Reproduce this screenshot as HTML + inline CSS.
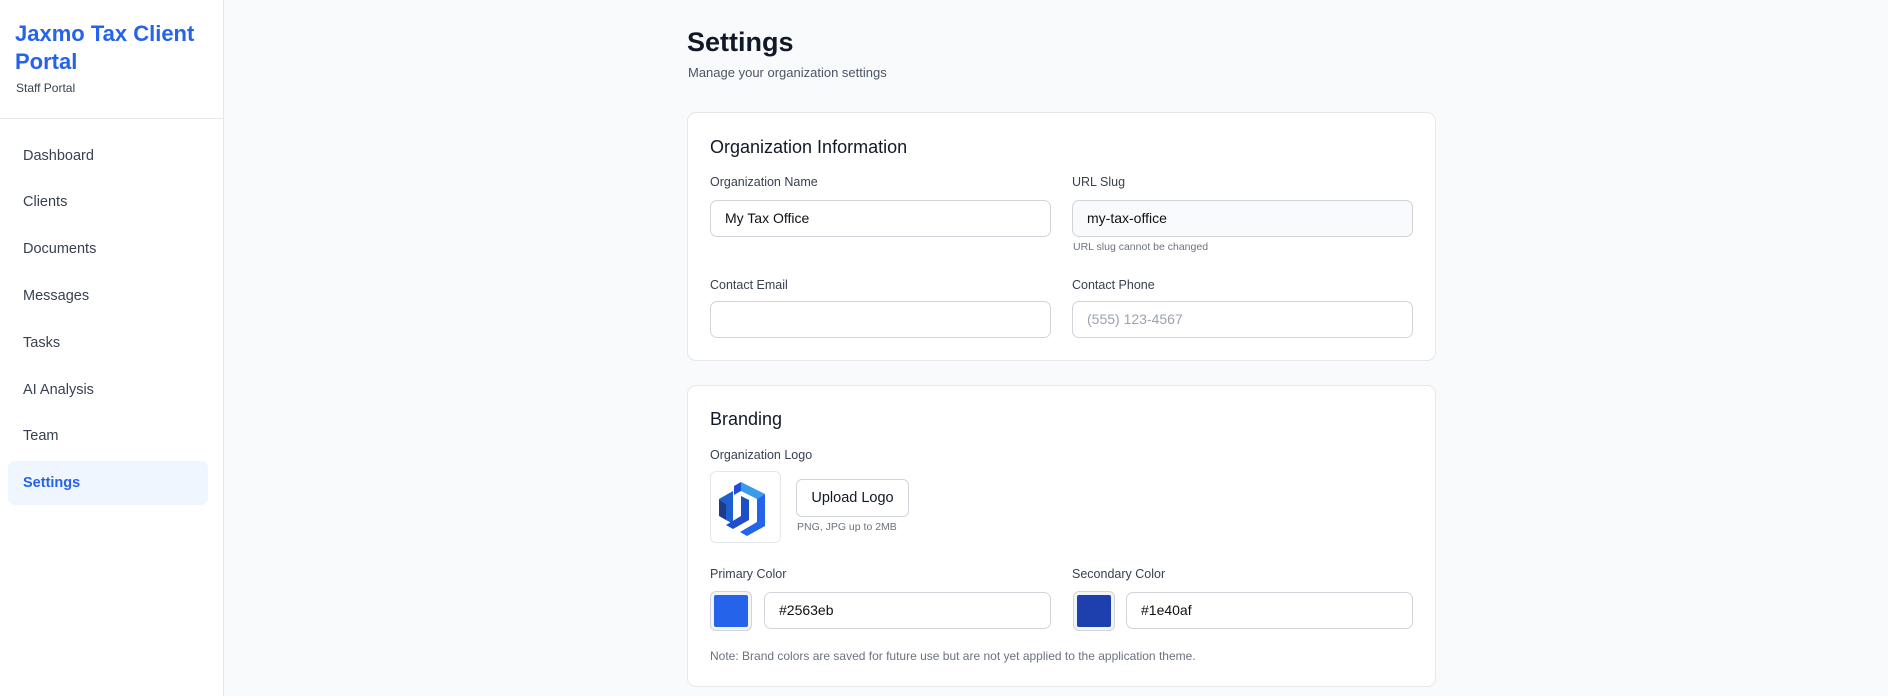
<!DOCTYPE html>
<html><head><style>
*{box-sizing:border-box;margin:0;padding:0}
body{width:1888px;height:696px;overflow:hidden;background:#f9fafb;font-family:"Liberation Sans",sans-serif;color:#111827;position:relative}
.side{position:absolute;left:0;top:0;width:224px;height:696px;background:#fff;border-right:1px solid #e5e7eb}
.brand{position:absolute;left:15px;top:20px;font-size:22px;font-weight:bold;color:#2563eb;line-height:28px;width:200px}
.sub{position:absolute;left:16px;top:81px;font-size:12px;color:#374151}
.hr{position:absolute;left:0;top:118px;width:223px;border-top:1px solid #e5e7eb}
.nav{position:absolute;left:23px;font-size:14.5px;color:#374151;transform:translateY(-50%)}
.act{position:absolute;left:8px;top:461px;width:200px;height:44px;background:#eff6ff;border-radius:7px}
.abs{position:absolute}
.card{position:absolute;left:687px;width:749px;background:#fff;border:1px solid #e5e7eb;border-radius:9px}
.lbl{position:absolute;font-size:12.5px;color:#374151;transform:translateY(-50%)}
.inp{position:absolute;height:37px;border:1px solid #d1d5db;border-radius:7px;background:#fff;font-size:14px;padding-left:14px;line-height:35px;color:#111}
.sw{position:absolute;width:42px;height:40px;border:1px solid #d1d5db;border-radius:6px;background:#f3f4f6;padding:3px}
.sw div{width:100%;height:100%;border-radius:2px}
</style></head><body>
<div class="side">
<div class="brand">Jaxmo Tax Client Portal</div>
<div class="sub">Staff Portal</div>
<div class="hr"></div>
<div class="act"></div>
<div class="nav" style="top:156px">Dashboard</div>
<div class="nav" style="top:202px">Clients</div>
<div class="nav" style="top:249px">Documents</div>
<div class="nav" style="top:296px">Messages</div>
<div class="nav" style="top:343px">Tasks</div>
<div class="nav" style="top:390px">AI Analysis</div>
<div class="nav" style="top:436px">Team</div>
<div class="nav" style="top:483px;color:#2563eb;font-weight:bold">Settings</div>
</div>
<div class="abs" style="left:687px;top:27px;font-size:27px;font-weight:bold">Settings</div>
<div class="abs" style="left:688px;top:65px;font-size:13px;color:#4b5563">Manage your organization settings</div>

<div class="card" style="top:112px;height:249px"></div>
<div class="abs" style="left:710px;top:137px;font-size:18px">Organization Information</div>
<div class="lbl" style="left:710px;top:182px">Organization Name</div>
<div class="lbl" style="left:1072px;top:182px">URL Slug</div>
<div class="inp" style="left:710px;top:200px;width:341px">My Tax Office</div>
<div class="inp" style="left:1072px;top:200px;width:341px;background:#f9fafb">my-tax-office</div>
<div class="lbl" style="left:1073px;top:247px;font-size:10.5px;color:#6b7280">URL slug cannot be changed</div>
<div class="lbl" style="left:710px;top:285px">Contact Email</div>
<div class="lbl" style="left:1072px;top:285px">Contact Phone</div>
<div class="inp" style="left:710px;top:301px;width:341px"></div>
<div class="inp" style="left:1072px;top:301px;width:341px;color:#9ca3af">(555) 123-4567</div>

<div class="card" style="top:385px;height:302px"></div>
<div class="abs" style="left:710px;top:409px;font-size:18px">Branding</div>
<div class="lbl" style="left:710px;top:455px">Organization Logo</div>
<div class="abs" style="left:710px;top:471px;width:71px;height:72px;border:1px solid #e5e7eb;border-radius:6px;background:#fff">
<svg width="71" height="72" viewBox="0 0 71 72"><polygon points="30,10 54,22 46,27 30,19" fill="#3b9be8"/><polygon points="30,10 30,19 23,23 23,14" fill="#1d4ed8"/><polygon points="8,27 22,19 22,52 15,48 15,32" fill="#1e5fd0"/><polygon points="8,27 15,32 15,48 8,44" fill="#1e3a8a"/><polygon points="46,27 54,22 54,54 36,64 29,60 46,50" fill="#2563eb"/><polygon points="30,24 38,28 38,48 22,57 15,53 30,44" fill="#1e4fc8"/><polygon points="22,57 29,60 36,64 29,60" fill="#1e3a8a"/></svg></div>
<div class="abs" style="left:796px;top:479px;width:113px;height:38px;border:1px solid #d1d5db;border-radius:6px;font-size:14.5px;text-align:center;line-height:36px">Upload Logo</div>
<div class="lbl" style="left:797px;top:527px;font-size:10.5px;color:#6b7280">PNG, JPG up to 2MB</div>
<div class="lbl" style="left:710px;top:574px">Primary Color</div>
<div class="lbl" style="left:1072px;top:574px">Secondary Color</div>
<div class="sw" style="left:710px;top:591px"><div style="background:#2563eb"></div></div>
<div class="inp" style="left:764px;top:592px;width:287px">#2563eb</div>
<div class="sw" style="left:1073px;top:591px"><div style="background:#1e40af"></div></div>
<div class="inp" style="left:1126px;top:592px;width:287px">#1e40af</div>
<div class="lbl" style="left:710px;top:656px;font-size:12px;color:#6b7280">Note: Brand colors are saved for future use but are not yet applied to the application theme.</div>
</body></html>
